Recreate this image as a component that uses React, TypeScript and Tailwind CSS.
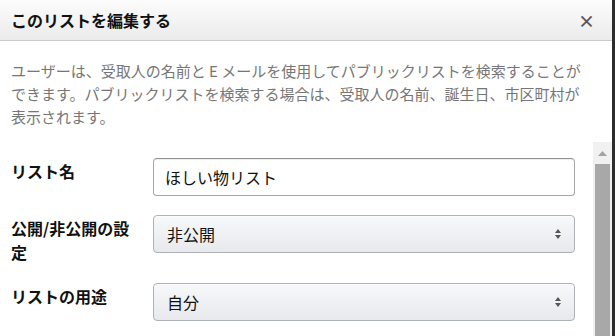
import React from "react";

const font = { fontFamily: '"Noto Sans CJK JP", "Noto Sans", Arial, sans-serif' };

function SelectArrows() {
  return (
    <svg width="8" height="12" viewBox="0 0 8 12" className="shrink-0">
      <path d="M4 1 L7 5 L1 5 Z" fill="#555" />
      <path d="M4 11 L7 7 L1 7 Z" fill="#555" />
    </svg>
  );
}

function Row({ label, children }: { label: string; children: React.ReactNode }) {
  return (
    <div className="flex items-start mb-[19px]">
      <div className="w-[142px] shrink-0 pr-[8px] pt-[1px] text-[16px] leading-[24px] font-bold text-[#111]">
        {label}
      </div>
      <div className="flex-1">{children}</div>
    </div>
  );
}

function FakeSelect({ value }: { value: string }) {
  return (
    <div className="h-[38px] rounded-[4px] border border-[#adb1b8] bg-gradient-to-b from-[#f7f8fa] to-[#e7e9ec] shadow-[0_1px_0_rgba(255,255,255,0.6)_inset] flex items-center justify-between pl-[13px] pr-[12px] text-[16px] text-[#111]">
      <span>{value}</span>
      <SelectArrows />
    </div>
  );
}

export default function App() {
  return (
    <div style={font} className="w-[615px] h-[336px] overflow-hidden bg-white flex flex-col border-r-[3px] border-[#2c2c2c]">
      <div className="h-[41px] shrink-0 flex items-center justify-between pl-[11px] pr-[17px] border-b border-[#cccccc] bg-gradient-to-b from-[#fcfcfc] to-[#ebebeb]">
        <h4 className="text-[16px] font-bold text-[#111]">このリストを編集する</h4>
        <span className="text-[17px] font-bold text-[#555] leading-none">×</span>
      </div>

      <p className="pl-[11px] pr-[26px] pt-[18px] text-[15px] leading-[23px] text-[#767676]">
        ユーザーは、受取人の名前と E メールを使用してパブリックリストを検索することができます。パブリックリストを検索する場合は、受取人の名前、誕生日、市区町村が表示されます。
      </p>

      <div className="flex-1 flex mt-[14px] min-h-0">
        <div className="flex-1 pl-[11px] pr-[18px] pt-[16px]">
          <Row label="リスト名">
            <div className="h-[38px] rounded-[4px] border border-[#a6a6a6] border-t-[#949494] bg-white flex items-center pl-[11px] text-[16px] text-[#111] shadow-[0_1px_0_rgba(0,0,0,0.07)_inset]">
              ほしい物リスト
            </div>
          </Row>
          <Row label="公開/非公開の設定">
            <FakeSelect value="非公開" />
          </Row>
          <Row label="リストの用途">
            <FakeSelect value="自分" />
          </Row>
        </div>

        <div className="w-[19px] shrink-0 bg-[#f1f1f1] flex flex-col items-center">
          <div className="h-[22px] flex items-center justify-center">
            <svg width="9" height="5" viewBox="0 0 9 5">
              <path d="M4.5 0 L9 5 L0 5 Z" fill="#a3a3a3" />
            </svg>
          </div>
          <div className="w-[15px] flex-1 bg-[#a8a8a8]" />
        </div>
      </div>
    </div>
  );
}
